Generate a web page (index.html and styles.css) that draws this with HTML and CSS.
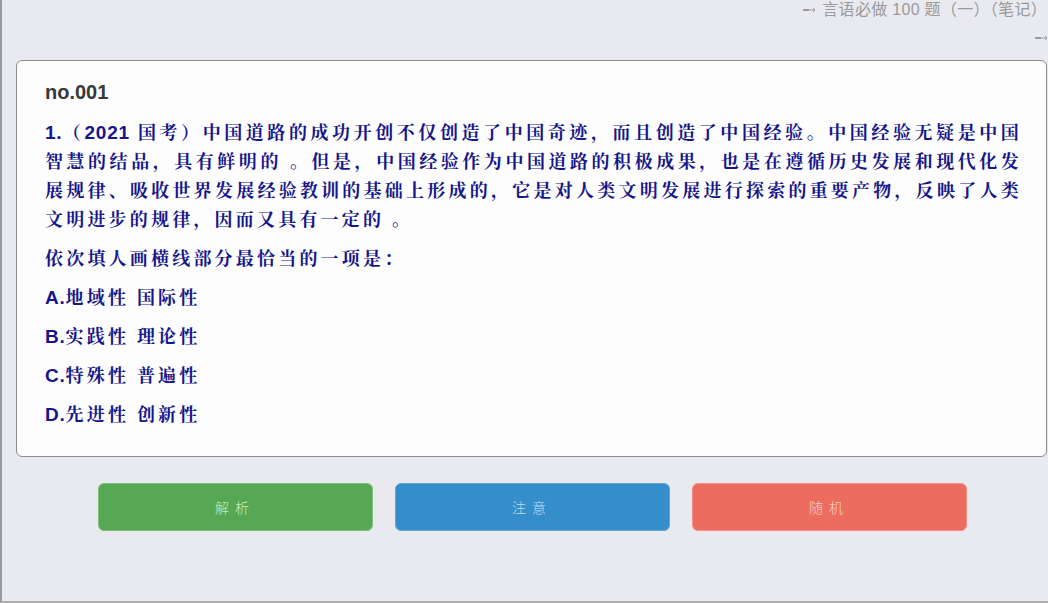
FILE: index.html
```html
<!DOCTYPE html>
<html lang="zh-CN">
<head>
  <meta charset="UTF-8">
  <title>言语必做 100 题</title>
  <link rel="stylesheet" href="styles.css">
</head>
<body>
  <div class="page">

    <div class="crumbs">
      <div class="crumb">
        <svg class="arrow" width="14" height="6" viewBox="0 0 14 6"><rect x="0" y="2" width="6" height="2" fill="#9a9a9a"/><path d="M6 3h6M10 1l2 2-2 2" stroke="#9a9a9a" stroke-width="1" fill="none"/></svg>
        言语必做 100 题（一）（笔记）
      </div>
      <div class="crumb crumb-sub">
        <svg class="arrow" width="14" height="6" viewBox="0 0 14 6"><rect x="0" y="2" width="6" height="2" fill="#9a9a9a"/><path d="M6 3h6M10 1l2 2-2 2" stroke="#9a9a9a" stroke-width="1" fill="none"/></svg>
      </div>
    </div>

    <div class="card">
      <div class="qno">no.001</div>
      <p class="question"><span class="latin">1.</span>（<span class="latin">2021</span> 国考）中国道路的成功开创不仅创造了中国奇迹，而且创造了中国经验。中国经验无疑是中国智慧的结品，具有鲜明的 。但是，中国经验作为中国道路的积极成果，也是在遵循历史发展和现代化发展规律、吸收世界发展经验教训的基础上形成的，它是对人类文明发展进行探索的重要产物，反映了人类文明进步的规律，因而又具有一定的 。</p>
      <p class="question">依次填人画横线部分最恰当的一项是：</p>
      <p class="option"><span class="latin">A.</span>地域性 国际性</p>
      <p class="option"><span class="latin">B.</span>实践性 理论性</p>
      <p class="option"><span class="latin">C.</span>特殊性 普遍性</p>
      <p class="option"><span class="latin">D.</span>先进性 创新性</p>
    </div>

    <div class="actions">
      <button class="btn btn-green">解析</button>
      <button class="btn btn-blue">注意</button>
      <button class="btn btn-red">随机</button>
    </div>

  </div>
</body>
</html>
```

FILE: styles.css
```css
html, body {
  margin: 0;
  padding: 0;
}

body {
  background: #e9eaef;
  font-family: "Liberation Sans", "Noto Sans CJK SC", sans-serif;
  overflow: hidden;
}

.page {
  height: 601px;
  border-left: 2px solid #9a9a9a;
  border-bottom: 2px solid #acacac;
  padding-left: 14px;
}

.crumbs {
  height: 60px;
  display: flex;
  flex-direction: column;
  align-items: flex-end;
}

.crumb {
  font-size: 16px;
  line-height: 20px;
  color: #9a9a9a;
  display: flex;
  align-items: center;
  gap: 5px;
  padding-right: 1px;
  letter-spacing: 0.3px;
}

.crumb-sub {
  margin-top: 15px;
  padding-right: 0;
  margin-right: -1px;
}

.arrow {
  display: block;
}

.card {
  background: #fdfdfd;
  border: 1px solid #8c8c8c;
  border-radius: 6px;
  margin-right: 1px;
  padding: 17px 24px 28px 28px;
  height: 350px;
}

.qno {
  font-size: 20px;
  font-weight: bold;
  color: #383838;
  line-height: 29px;
  margin-bottom: 10px;
}

.question, .option {
  margin: 0 0 10px;
  font-family: "Noto Serif CJK SC", "Liberation Sans", "Noto Sans CJK SC", serif;
  font-size: 18px;
  font-weight: bold;
  line-height: 29px;
  color: #16168a;
  letter-spacing: 3.2px;
  text-align: justify;
}

.latin {
  font-family: "Liberation Sans", sans-serif;
  font-size: 19px;
  letter-spacing: 0.8px;
  line-height: 18px;
}

.actions {
  display: flex;
  justify-content: center;
  gap: 22px;
  padding-top: 26px;
}

.btn {
  width: 275px;
  height: 48px;
  border-radius: 6px;
  font-family: "Noto Sans CJK SC", sans-serif;
  font-size: 14px;
  font-weight: 300;
  letter-spacing: 6px;
  padding-left: 6px;
  cursor: pointer;
}

.btn-green {
  background: #57a855;
  border: 1px solid #7cc07a;
  color: #c6ecc0;
}

.btn-blue {
  background: #358dca;
  border: 1px solid #5ea7dc;
  color: #c2def4;
}

.btn-red {
  background: #ec6c60;
  border: 1px solid #f29087;
  color: #fbcbc4;
}
```
